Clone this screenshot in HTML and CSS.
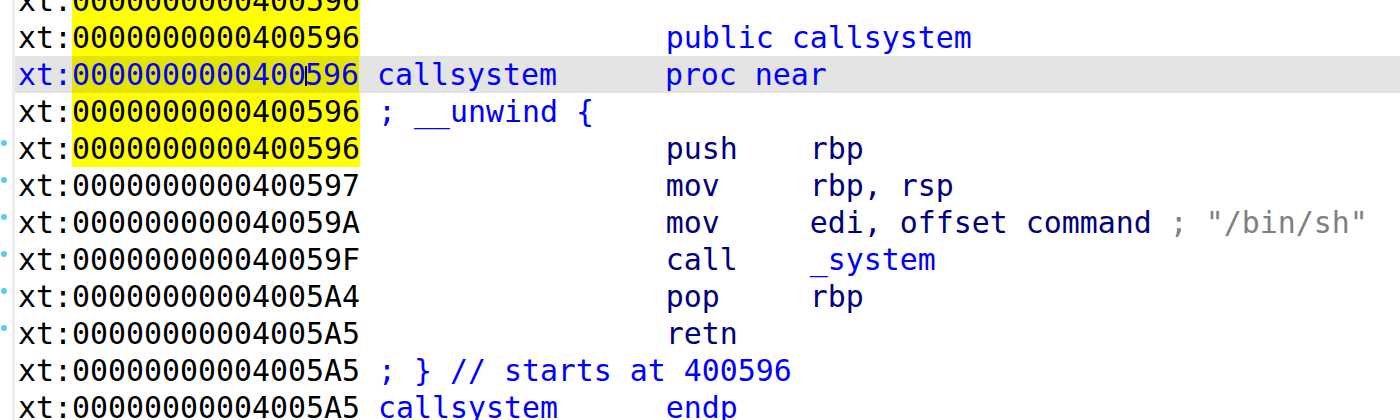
FILE: index.html
```html
<!DOCTYPE html>
<html>
<head>
<meta charset="utf-8">
<link rel="stylesheet" href="styles.css">
</head>
<body>
<div class="view">
  <div class="listing">
    <div class="row"><span class="mark"></span><div class="line"><span class="seg">xt:</span><span class="seg hl">0000000000400596</span></div></div>
    <div class="row"><span class="mark"></span><div class="line"><span class="seg">xt:</span><span class="seg hl">0000000000400596</span><span class="kw">                 public callsystem</span></div></div>
    <div class="row cur"><span class="mark"></span><div class="line"><span class="seg addr-cur">xt:</span><span class="seg hl addr-cur">0000000000400<span class="caret"></span>596</span><span class="kw"> callsystem      proc near</span></div></div>
    <div class="row"><span class="mark"></span><div class="line"><span class="seg">xt:</span><span class="seg hl">0000000000400596</span><span class="kw"> ; __unwind {</span></div></div>
    <div class="row"><span class="mark"><i class="dot"></i></span><div class="line"><span class="seg">xt:</span><span class="seg hl">0000000000400596</span><span class="ins">                 push    rbp</span></div></div>
    <div class="row"><span class="mark"><i class="dot"></i></span><div class="line"><span class="seg">xt:0000000000400597</span><span class="ins">                 mov     rbp, rsp</span></div></div>
    <div class="row"><span class="mark"><i class="dot"></i></span><div class="line"><span class="seg">xt:000000000040059A</span><span class="ins">                 mov     edi, offset command </span><span class="cmt">; "/bin/sh"</span></div></div>
    <div class="row"><span class="mark"><i class="dot"></i></span><div class="line"><span class="seg">xt:000000000040059F</span><span class="ins">                 call    </span><span class="kw">_system</span></div></div>
    <div class="row"><span class="mark"><i class="dot"></i></span><div class="line"><span class="seg">xt:00000000004005A4</span><span class="ins">                 pop     rbp</span></div></div>
    <div class="row"><span class="mark"><i class="dot"></i></span><div class="line"><span class="seg">xt:00000000004005A5</span><span class="ins">                 retn</span></div></div>
    <div class="row"><span class="mark"></span><div class="line"><span class="seg">xt:00000000004005A5</span><span class="kw"> ; } // starts at 400596</span></div></div>
    <div class="row"><span class="mark"></span><div class="line"><span class="seg">xt:00000000004005A5</span><span class="kw"> callsystem      endp</span></div></div>
  </div>
</div>
</body>
</html>
```
FILE: styles.css
```css
html, body {
  margin: 0;
  padding: 0;
  background: #ffffff;
}
.view {
  width: 1400px;
  height: 420px;
  overflow: hidden;
}
.listing {
  margin-top: -18px;
  font-family: "DejaVu Sans Mono", "Liberation Mono", monospace;
  font-size: 29.9px;
  line-height: 37px;
  color: #000000;
}
.row {
  display: flex;
  height: 37px;
}
.mark {
  width: 12px;
  flex: none;
  position: relative;
}
.dot {
  position: absolute;
  left: 1px;
  top: 10px;
  width: 6px;
  height: 6px;
  border-radius: 50%;
  background: #5ccaf7;
}
.line {
  flex: 1;
  border-left: 3px solid #eeeeee;
  padding-left: 3px;
  white-space: pre;
  display: flex;
  align-items: flex-start;
}
.seg {
  display: inline-block;
  height: 37px;
}
.hl {
  background: #ffff00;
}
.cur .line {
  background: #e4e4e4;
}
.cur .hl {
  background: #e4e400;
}
.addr-cur {
  color: #0000ff;
}
.caret {
  display: inline-block;
  width: 2px;
  height: 20px;
  margin-right: -2px;
  margin-left: -1px;
  background: #000000;
  vertical-align: -1px;
}
.kw {
  color: #0000ff;
}
.ins {
  color: #000080;
}
.cmt {
  color: #808080;
}
```
